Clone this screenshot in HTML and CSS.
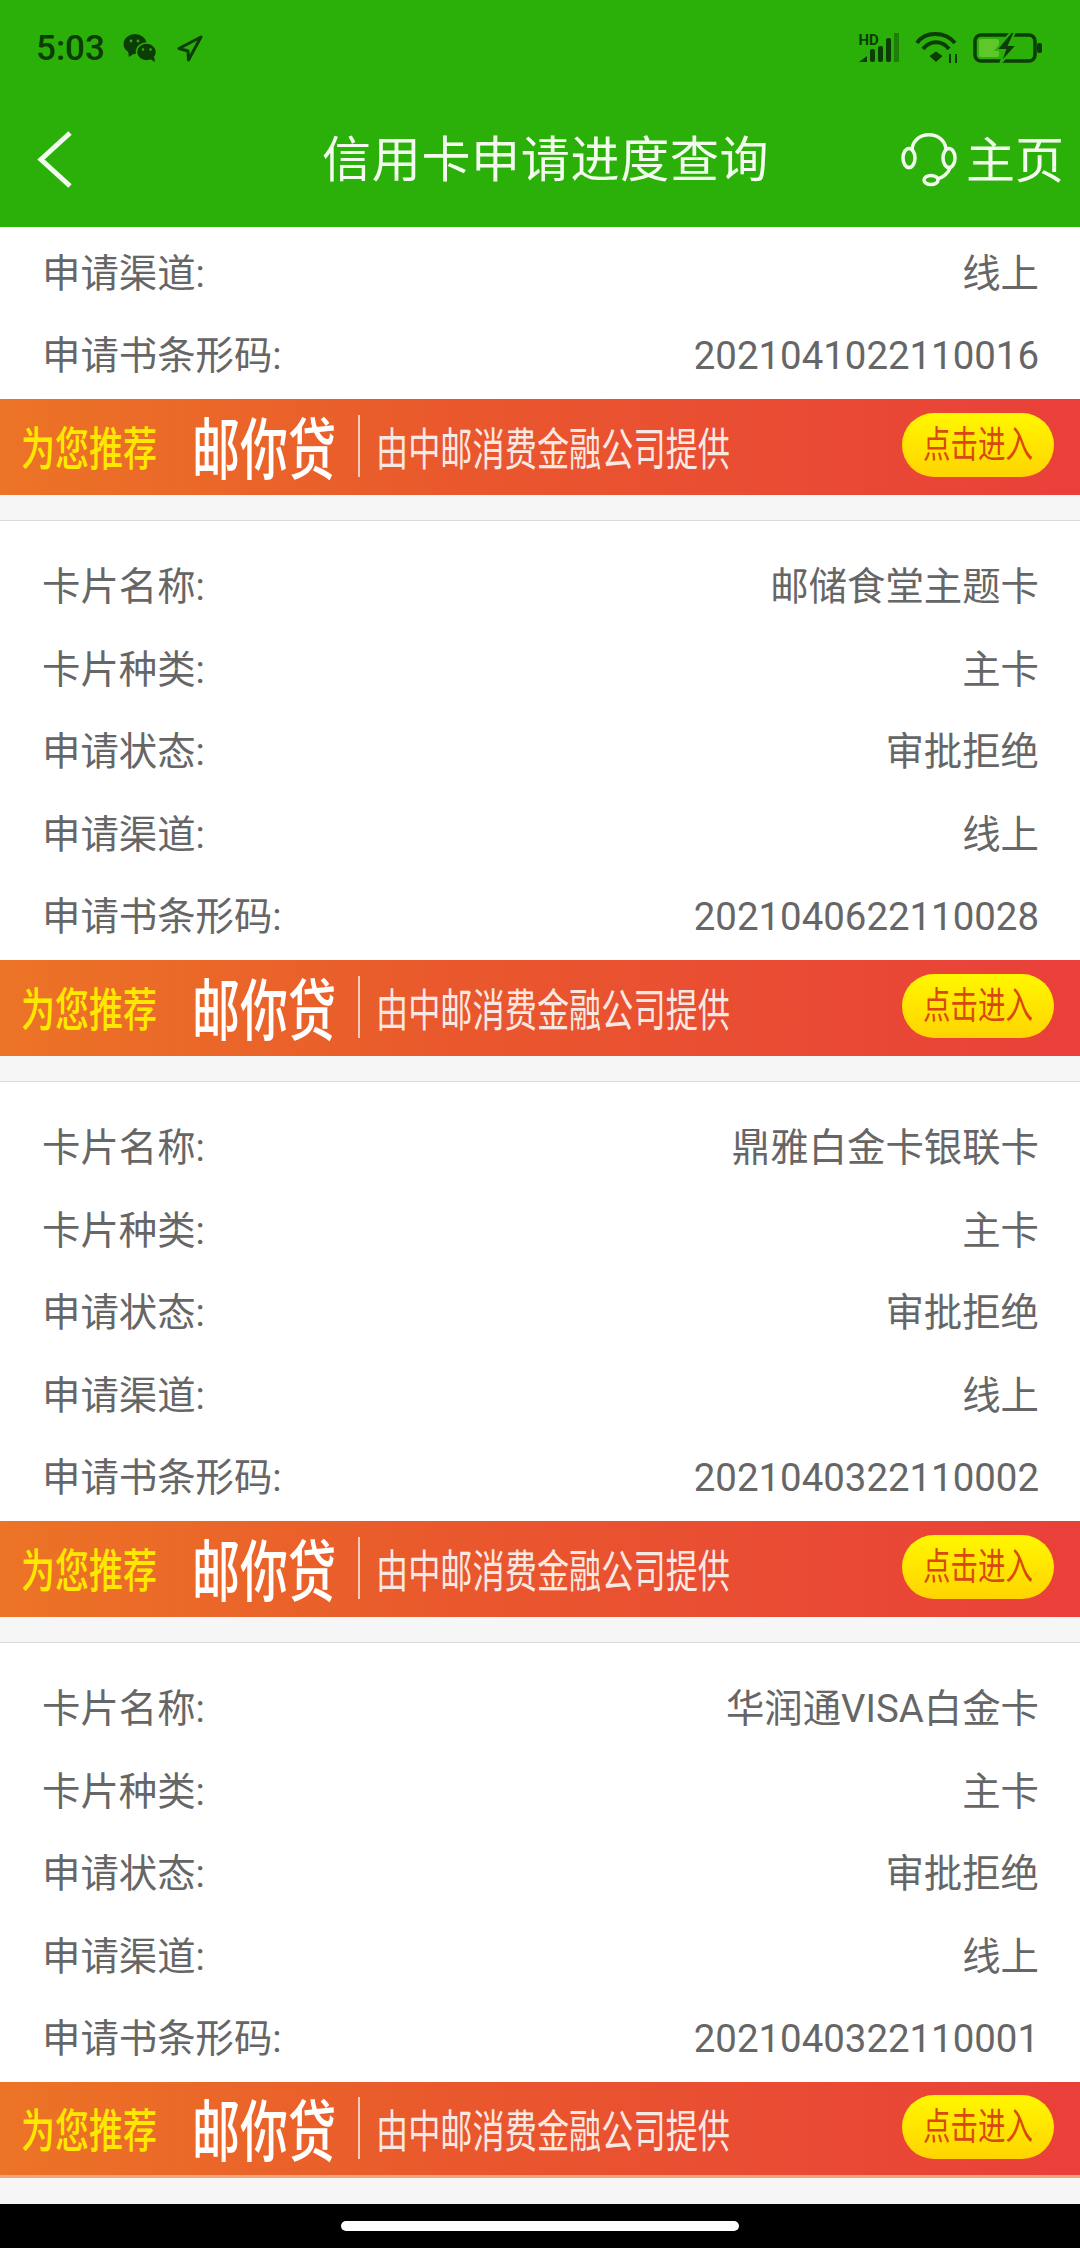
FILE: index.html
```html
<!DOCTYPE html>
<html>
<head>
    <title>信用卡申请进度查询</title>
    <link rel="stylesheet" href="styles.css">
</head>
<body>
    <div id="phone">
        <div id="header">
            <div class="statusBar">
                <span class="clock">5:03</span>
                <svg class="wechatIcon" width="34" height="28" viewBox="0 0 34 28">
                    <ellipse cx="12" cy="10" rx="11.5" ry="10" fill="#0c3d06"/>
                    <path d="M5 17l1 6 6-4z" fill="#0c3d06"/>
                    <ellipse cx="23.5" cy="18" rx="10" ry="9" fill="#0c3d06" stroke="#2bb009" stroke-width="1.5"/>
                    <path d="M27 25l5 3-1-6z" fill="#0c3d06"/>
                    <circle cx="8" cy="7" r="1.4" fill="#2bb009"/>
                    <circle cx="15" cy="7" r="1.4" fill="#2bb009"/>
                    <circle cx="20" cy="15.5" r="1.3" fill="#2bb009"/>
                    <circle cx="27.5" cy="15.5" r="1.3" fill="#2bb009"/>
                </svg>
                <svg class="locationIcon" width="27" height="27" viewBox="0 0 27 27">
                    <path d="M25 2L3 13.5 12 16l.5 9z" fill="none" stroke="#0c3d06" stroke-width="3" stroke-linejoin="round"/>
                </svg>
                <span class="spacer"></span>
                <svg class="signalIcon" width="42" height="30" viewBox="0 0 42 30">
                    <text x="0.5" y="11.5" class="hdText">HD</text>
                    <path d="M1 29l8-6v6z" fill="#0c3d06"/>
                    <rect x="12" y="16" width="5" height="13" rx="2" fill="#0c3d06"/>
                    <rect x="20" y="13" width="5" height="16" rx="2" fill="#0c3d06"/>
                    <rect x="28" y="5" width="5" height="24" rx="2" fill="#0c3d06"/>
                    <rect x="36" y="0" width="5" height="29" fill="#1f7d0c"/>
                </svg>
                <svg class="wifiIcon" width="44" height="32" viewBox="0 0 44 32">
                    <path d="M2 11C10 -1 30 -1 40 11" fill="none" stroke="#0c3d06" stroke-width="4"/>
                    <path d="M8 17C15 8 27 8 34 17" fill="none" stroke="#0c3d06" stroke-width="4"/>
                    <path d="M14.500 24L21 19.500 27.500 24 21 30z" fill="#0c3d06"/>
                    <path d="M35 22v9M41 22v9" stroke="#0c3d06" stroke-width="2"/>
                </svg>
                <svg class="batteryIcon" width="69" height="32" viewBox="0 0 69 32">
                    <rect x="2" y="3" width="60" height="26" rx="6" fill="none" stroke="#0c3d06" stroke-width="3.500"/>
                    <rect x="6" y="7" width="20" height="18" rx="2" fill="#5fc62c"/>
                    <path d="M38 0L23 18h9l-5 14 17-19h-8l6-13z" fill="#0c3d06" stroke="#2bb009" stroke-width="2"/>
                    <rect x="64" y="11" width="5" height="10" rx="2" fill="#0c3d06"/>
                </svg>
            </div>
            <div class="navBar">
                <svg class="backIcon" width="36" height="58" viewBox="0 0 36 58">
                    <path d="M33 2L4 28.500 33 55" fill="none" stroke="#f3fbef" stroke-width="5"/>
                </svg>
                <span class="navTitle">信用卡申请进度查询</span>
                <svg class="serviceIcon" width="56" height="54" viewBox="0 0 56 54">
                    <path d="M11 16C13 -3 43 -3 45 16" fill="none" stroke="#f3fbef" stroke-width="3.500"/>
                    <ellipse cx="8" cy="25" rx="6" ry="9.500" fill="none" stroke="#f3fbef" stroke-width="3.500"/>
                    <ellipse cx="48" cy="25" rx="6" ry="9.500" fill="none" stroke="#f3fbef" stroke-width="3.500"/>
                    <path d="M49 35C47 41 41 45 36 46" fill="none" stroke="#f3fbef" stroke-width="3.500"/>
                    <ellipse cx="30" cy="47" rx="7" ry="4.500" fill="none" stroke="#f3fbef" stroke-width="3.500"/>
                </svg>
                <span class="navHome">主页</span>
            </div>
        </div>

        <div id="list">
            <div class="card firstCard">
                <div class="row"><span>申请渠道:</span><span>线上</span></div>
                <div class="row"><span>申请书条形码:</span><span>2021041022110016</span></div>
                <div class="promo"><span class="promoTag">为您推荐</span><span class="promoName">邮你贷</span><span class="promoLine"></span><span class="promoText">由中邮消费金融公司提供</span><span class="promoBtn"><span class="promoBtnText">点击进入</span></span></div>
            </div>
            <div class="card">
                <div class="row"><span>卡片名称:</span><span>邮储食堂主题卡</span></div>
                <div class="row"><span>卡片种类:</span><span>主卡</span></div>
                <div class="row"><span>申请状态:</span><span>审批拒绝</span></div>
                <div class="row"><span>申请渠道:</span><span>线上</span></div>
                <div class="row"><span>申请书条形码:</span><span>2021040622110028</span></div>
                <div class="promo"><span class="promoTag">为您推荐</span><span class="promoName">邮你贷</span><span class="promoLine"></span><span class="promoText">由中邮消费金融公司提供</span><span class="promoBtn"><span class="promoBtnText">点击进入</span></span></div>
            </div>
            <div class="card">
                <div class="row"><span>卡片名称:</span><span>鼎雅白金卡银联卡</span></div>
                <div class="row"><span>卡片种类:</span><span>主卡</span></div>
                <div class="row"><span>申请状态:</span><span>审批拒绝</span></div>
                <div class="row"><span>申请渠道:</span><span>线上</span></div>
                <div class="row"><span>申请书条形码:</span><span>2021040322110002</span></div>
                <div class="promo"><span class="promoTag">为您推荐</span><span class="promoName">邮你贷</span><span class="promoLine"></span><span class="promoText">由中邮消费金融公司提供</span><span class="promoBtn"><span class="promoBtnText">点击进入</span></span></div>
            </div>
            <div class="card">
                <div class="row"><span>卡片名称:</span><span>华润通VISA白金卡</span></div>
                <div class="row"><span>卡片种类:</span><span>主卡</span></div>
                <div class="row"><span>申请状态:</span><span>审批拒绝</span></div>
                <div class="row"><span>申请渠道:</span><span>线上</span></div>
                <div class="row"><span>申请书条形码:</span><span>2021040322110001</span></div>
                <div class="promo lastPromo"><span class="promoTag">为您推荐</span><span class="promoName">邮你贷</span><span class="promoLine"></span><span class="promoText">由中邮消费金融公司提供</span><span class="promoBtn"><span class="promoBtnText">点击进入</span></span></div>
            </div>
        </div>

        <div id="gestureBar"><span class="homeBar"></span></div>
    </div>
</body>
</html>
```

FILE: styles.css
```css
body {
    margin: 0;
    font-family: Roboto, "Noto Sans CJK SC", sans-serif;
}
#phone {
    display: flex;
    flex-direction: column;
    width: 1080px;
    height: 2248px;
    overflow: hidden;
    background-color: #f6f6f6;
}
#header {
    flex: none;
    height: 227px;
    background-color: #2bb009;
}
.statusBar {
    display: flex;
    align-items: center;
    height: 96px;
    padding: 0 38px 0 36px;
}
.clock {
    font-size: 35px;
    font-weight: 500;
    color: #0c3d06;
}
.wechatIcon {
    margin-left: 18px;
}
.locationIcon {
    margin-left: 19px;
}
.spacer {
    flex: 1;
}
.signalIcon {
    overflow: visible;
}
.hdText {
    font-size: 15px;
    font-weight: 700;
    fill: #0c3d06;
}
.wifiIcon {
    margin-left: 15px;
}
.batteryIcon {
    margin-left: 14px;
}
.navBar {
    display: flex;
    align-items: center;
    height: 131px;
    padding: 0 16px 0 37px;
    color: #f3fbef;
}
.backIcon {
    margin-bottom: 4px;
}
.navTitle {
    flex: 1;
    margin: 0 0 12px 249px;
    font-size: 49px;
    letter-spacing: 0.7px;
}
.serviceIcon {
    margin: 0 9px 3px 0;
}
.navHome {
    margin-bottom: 11px;
    font-size: 49px;
}
#list {
    flex: 1;
    overflow: hidden;
}
.card {
    margin-bottom: 25px;
    padding-top: 23px;
    background-color: #fff;
    border-top: 1px solid #dadada;
}
.firstCard {
    padding-top: 3.5px;
    border-top: none;
}
.row {
    display: flex;
    justify-content: space-between;
    height: 82.5px;
    line-height: 86px;
    padding: 0 41px 0 42px;
    font-size: 38.4px;
    color: #666;
}
.promo {
    display: flex;
    align-items: center;
    box-sizing: border-box;
    height: 96px;
    margin-top: 3.5px;
    background: linear-gradient(90deg, #ec7426 0%, #e9592c 40%, #e9403a 100%);
    color: #f9e8e2;
    white-space: nowrap;
}
.lastPromo {
    border-bottom: 3px solid #f1a57c;
}
.promoTag {
    width: 136px;
    margin: 0 0 3px 21px;
    font-size: 34px;
    font-weight: 500;
    color: #ffe800;
    transform: scaleY(1.35);
}
.promoName {
    width: 144px;
    margin: 0 0 4px 35px;
    font-size: 48px;
    font-weight: 500;
    color: #fff;
    transform: scaleY(1.4);
}
.promoLine {
    width: 2px;
    height: 62px;
    margin: 0 0 2px 22px;
    background-color: #f5cdbd;
}
.promoText {
    width: 354px;
    margin: 0 0 2px 16px;
    font-size: 32.2px;
    transform: scaleY(1.4);
}
.promoBtn {
    width: 152px;
    height: 64px;
    margin: 0 26px 4px auto;
    line-height: 66px;
    text-align: center;
    border-radius: 32px;
    background: linear-gradient(180deg, #fff700, #ffd400);
    color: #d9480f;
    font-size: 27.5px;
}
.promoBtnText {
    display: inline-block;
    transform: scaleY(1.35);
}
#gestureBar {
    flex: none;
    display: flex;
    align-items: center;
    justify-content: center;
    height: 44px;
    background-color: #000;
}
.homeBar {
    width: 398px;
    height: 10px;
    border-radius: 5px;
    background-color: #fff;
}
```
